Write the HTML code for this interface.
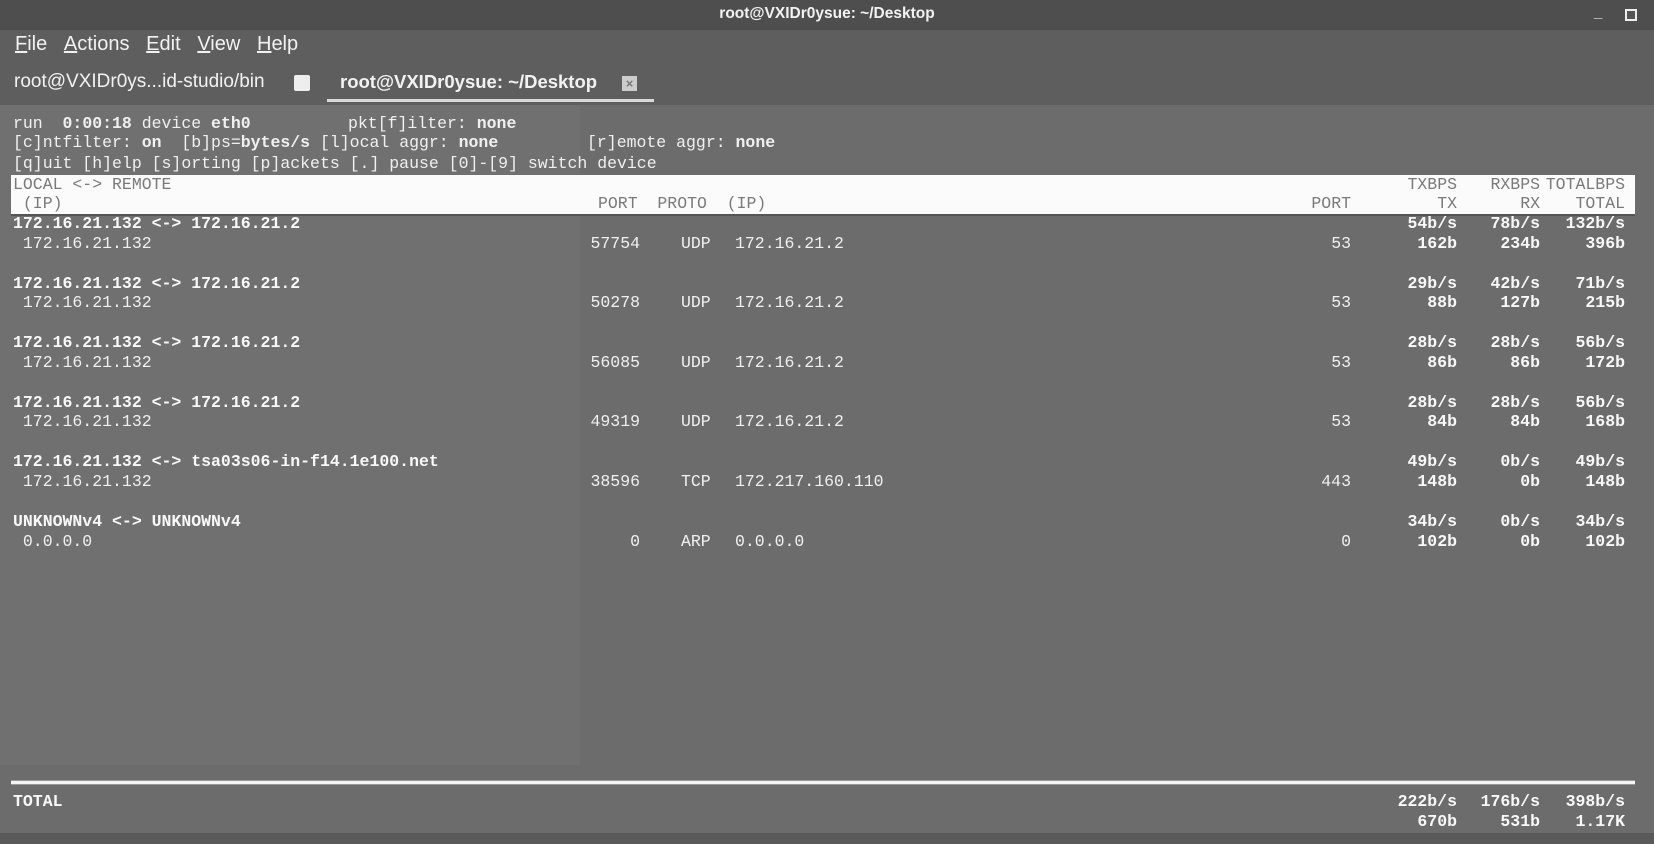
<!DOCTYPE html>
<html><head><meta charset="utf-8"><style>
html,body{margin:0;padding:0}
body{width:1654px;height:844px;position:relative;overflow:hidden;background:#6c6c6c;font-family:"Liberation Mono",monospace;}
.a{position:absolute;white-space:pre;font-size:16.5px;line-height:20px;color:#f0f0f0;}
.b{font-weight:bold;color:#f8f8f8}
.r{text-align:right}
.s{position:absolute;font-family:"Liberation Sans",sans-serif;color:#f2f2f2;white-space:pre}
.h{color:#7a7a7a;font-weight:normal}
</style></head><body>
<div style="position:absolute;left:0;top:0;width:1654px;height:30px;background:#4e4e4e"></div>
<div style="position:absolute;left:0;top:30px;width:1654px;height:75px;background:#5e5e5e"></div>
<div style="position:absolute;left:0;top:105px;width:580px;height:660px;background:#707070"></div>
<div style="position:absolute;left:0;top:833px;width:1654px;height:11px;background:#5a5a5a"></div>
<div class="s" style="left:0;width:1654px;text-align:center;top:5px;font-size:15.5px;font-weight:bold">root@VXIDr0ysue: ~/Desktop</div>
<div class="s" style="left:1594px;top:4px;font-size:15px;font-weight:bold">_</div>
<div style="position:absolute;left:1625px;top:9px;width:8px;height:8px;border:2px solid #eee;background:#555"></div>
<div class="s" style="left:15px;top:33px;font-size:20px"><u>F</u>ile&nbsp;&nbsp;&nbsp;<u>A</u>ctions&nbsp;&nbsp;&nbsp;<u>E</u>dit&nbsp;&nbsp;&nbsp;<u>V</u>iew&nbsp;&nbsp;&nbsp;<u>H</u>elp</div>
<div class="s" style="left:14px;top:71px;font-size:19px">root@VXIDr0ys...id-studio/bin</div>
<div style="position:absolute;left:294px;top:75px;width:16px;height:16px;background:#eee;border-radius:2px"></div>
<div class="s" style="left:340px;top:71px;font-size:18.5px;font-weight:bold">root@VXIDr0ysue: ~/Desktop</div>
<div style="position:absolute;left:622px;top:76px;width:15px;height:15px;background:#ccc;color:#777;font:bold 13px 'Liberation Sans';text-align:center;line-height:15px">×</div>
<div style="position:absolute;left:327px;top:99px;width:327px;height:3px;background:#d8d8d8"></div>

<div class="a" style="left:13px;top:114px">run  <b>0:00:18</b> device <b>eth0</b></div>
<div class="a" style="left:348px;top:114px">pkt[f]ilter: <b>none</b></div>
<div class="a" style="left:13px;top:133px">[c]ntfilter: <b>on</b>  [b]ps=<b>bytes/s</b> [l]ocal aggr: <b>none</b></div>
<div class="a" style="left:587px;top:133px">[r]emote aggr: <b>none</b></div>
<div class="a" style="left:13px;top:154px">[q]uit [h]elp [s]orting [p]ackets [.] pause [0]-[9] switch device</div>

<div style="position:absolute;left:11px;top:175px;width:1624px;height:39px;background:#fbfbfb;border-bottom:2px solid #555"></div>
<div class="a h" style="left:13px;top:175px">LOCAL &lt;-&gt; REMOTE</div>
<div class="a h" style="left:13px;top:194px"> (IP)</div>
<div class="a h" style="left:598px;top:194px">PORT  PROTO  (IP)</div>
<div class="a h r" style="right:303px;top:194px">PORT</div>
<div class="a h r" style="right:197px;top:175px">TXBPS</div>
<div class="a h r" style="right:197px;top:194px">TX</div>
<div class="a h r" style="right:114px;top:175px">RXBPS</div>
<div class="a h r" style="right:114px;top:194px">RX</div>
<div class="a h r" style="right:29px;top:175px">TOTALBPS</div>
<div class="a h r" style="right:29px;top:194px">TOTAL</div>

<div id="rows"></div>
<script>
var d=[["172.16.21.132 &lt;-&gt; 172.16.21.2","172.16.21.132","57754","UDP","172.16.21.2","53","54b/s","78b/s","132b/s","162b","234b","396b"],
["172.16.21.132 &lt;-&gt; 172.16.21.2","172.16.21.132","50278","UDP","172.16.21.2","53","29b/s","42b/s","71b/s","88b","127b","215b"],
["172.16.21.132 &lt;-&gt; 172.16.21.2","172.16.21.132","56085","UDP","172.16.21.2","53","28b/s","28b/s","56b/s","86b","86b","172b"],
["172.16.21.132 &lt;-&gt; 172.16.21.2","172.16.21.132","49319","UDP","172.16.21.2","53","28b/s","28b/s","56b/s","84b","84b","168b"],
["172.16.21.132 &lt;-&gt; tsa03s06-in-f14.1e100.net","172.16.21.132","38596","TCP","172.217.160.110","443","49b/s","0b/s","49b/s","148b","0b","148b"],
["UNKNOWNv4 &lt;-&gt; UNKNOWNv4","0.0.0.0","0","ARP","0.0.0.0","0","34b/s","0b/s","34b/s","102b","0b","102b"]];
var h="";
d.forEach(function(r,i){var t=214+i*59.6,u=t+19.5;
h+='<div class="a b" style="left:13px;top:'+t+'px">'+r[0]+'</div>';
h+='<div class="a" style="left:13px;top:'+u+'px"> '+r[1]+'</div>';
h+='<div class="a r" style="right:1014px;top:'+u+'px">'+r[2]+'</div>';
h+='<div class="a" style="left:681px;top:'+u+'px">'+r[3]+'</div>';
h+='<div class="a" style="left:735px;top:'+u+'px">'+r[4]+'</div>';
h+='<div class="a r" style="right:303px;top:'+u+'px">'+r[5]+'</div>';
[197,114,29].forEach(function(x,k){
h+='<div class="a b r" style="right:'+x+'px;top:'+t+'px">'+r[6+k]+'</div>';
h+='<div class="a b r" style="right:'+x+'px;top:'+u+'px">'+r[9+k]+'</div>';});
});
document.getElementById("rows").innerHTML=h;
</script>

<div style="position:absolute;left:11px;top:780px;width:1624px;height:3px;background:#f4f4f4;border-top:1px solid #999;border-bottom:1px solid #999"></div>
<div class="a b" style="left:13px;top:792px">TOTAL</div>
<div class="a b r" style="right:197px;top:792px">222b/s</div>
<div class="a b r" style="right:114px;top:792px">176b/s</div>
<div class="a b r" style="right:29px;top:792px">398b/s</div>
<div class="a b r" style="right:197px;top:812px">670b</div>
<div class="a b r" style="right:114px;top:812px">531b</div>
<div class="a b r" style="right:29px;top:812px">1.17K</div>
</body></html>
